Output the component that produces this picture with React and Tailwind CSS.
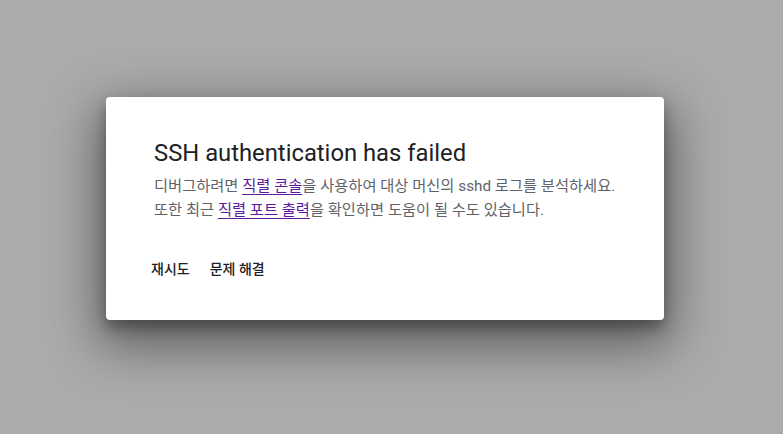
export default function App() {
  return (
    <div className="w-[783px] h-[434px] bg-[#ababab] pt-[97px] pl-[106px] font-['Roboto','Noto_Sans_CJK_KR',sans-serif]">
      <div className="w-[558px] h-[223px] bg-white rounded-[4px] shadow-[0_18px_50px_8px_rgba(0,0,0,0.45),0_8px_14px_rgba(0,0,0,0.3)] pl-[48px] pr-[40px] pt-[40px]">
        <h1 className="text-[23.8px] leading-[32px] text-[#202124]">SSH authentication has failed</h1>
        <p className="mt-[5px] text-[15.3px] leading-[24px] text-[#5f6368]">
          <span className="block">
            디버그하려면 <a href="#" className="text-[#5c1a9c] underline underline-offset-[3px]">직렬 콘솔</a>을 사용하여 대상 머신의 sshd 로그를 분석하세요.
          </span>
          <span className="block">
            또한 최근 <a href="#" className="text-[#5c1a9c] underline underline-offset-[3px]">직렬 포트 출력</a>을 확인하면 도움이 될 수도 있습니다.
          </span>
        </p>
        <div className="mt-[29px] -ml-[11px] flex gap-[4px]">
          <button className="px-[8px] h-[36px] text-[14px] font-medium text-[#202124]">재시도</button>
          <button className="px-[8px] h-[36px] text-[14px] font-medium text-[#202124]">문제 해결</button>
        </div>
      </div>
    </div>
  );
}
